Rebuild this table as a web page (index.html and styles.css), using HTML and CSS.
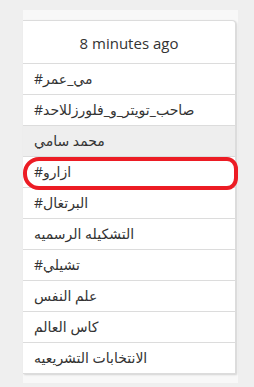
FILE: index.html
```html
<!DOCTYPE html>
<html lang="ar">
<head>
    <meta charset="UTF-8">
    <meta name="viewport" content="width=device-width, initial-scale=1.0">
    <title>Trends</title>
    <link rel="stylesheet" href="styles.css">
</head>
<body>
    <div class="panel">
        <div class="trends">
            <div class="trends-header">8 minutes ago</div>
            <ul class="trend-list">
                <li dir="ltr">#مي_عمر</li>
                <li dir="ltr">#صاحب_تويتر_و_فلورزللاحد</li>
                <li dir="ltr" class="active">محمد سامي</li>
                <li dir="ltr" class="marked">#ازارو</li>
                <li dir="ltr">#البرتغال</li>
                <li dir="ltr">التشكيله الرسميه</li>
                <li dir="ltr">#تشيلي</li>
                <li dir="ltr">علم النفس</li>
                <li dir="ltr">كاس العالم</li>
                <li dir="ltr">الانتخابات التشريعيه</li>
            </ul>
        </div>
    </div>
</body>
</html>
```

FILE: styles.css
```css
body {
    margin: 0;
    padding: 10px 0 0 0;
    background-color: #efefef;
    font-family: "Open Sans", "DejaVu Sans", sans-serif;
    color: #333333;
}

.panel {
    margin-left: 23px;
    width: 215px;
    padding: 10px 0 9px 0;
    background-color: #f8f8f8;
}

.trends {
    width: 212px;
    background: #ffffff;
    border: 1px solid #dcdcdc;
    border-left: none;
    border-top-right-radius: 4px;
    box-shadow: 1px 1px 2px rgba(0, 0, 0, 0.15);
}

.trends-header {
    height: 42px;
    line-height: 44px;
    text-align: center;
    font-size: 15px;
    color: #333333;
    border-bottom: 1px solid #dcdcdc;
}

.trend-list {
    list-style: none;
    margin: 0;
    padding: 0;
}

.trend-list li {
    position: relative;
    height: 30px;
    line-height: 30px;
    padding-left: 11px;
    font-size: 14px;
    text-align: left;
    border-bottom: 1px solid #dcdcdc;
}

.trend-list li:last-child {
    border-bottom: none;
}

.trend-list li.active {
    background-color: #eeeeee;
}

/* hand-drawn red ring around one trend */
.trend-list li.marked::after {
    content: "";
    position: absolute;
    left: 0;
    right: -3px;
    top: 0;
    bottom: -3px;
    border: 4px solid #ec1c24;
    border-radius: 16px 11px 11px 16px / 16px 12px 12px 16px;
}
```
